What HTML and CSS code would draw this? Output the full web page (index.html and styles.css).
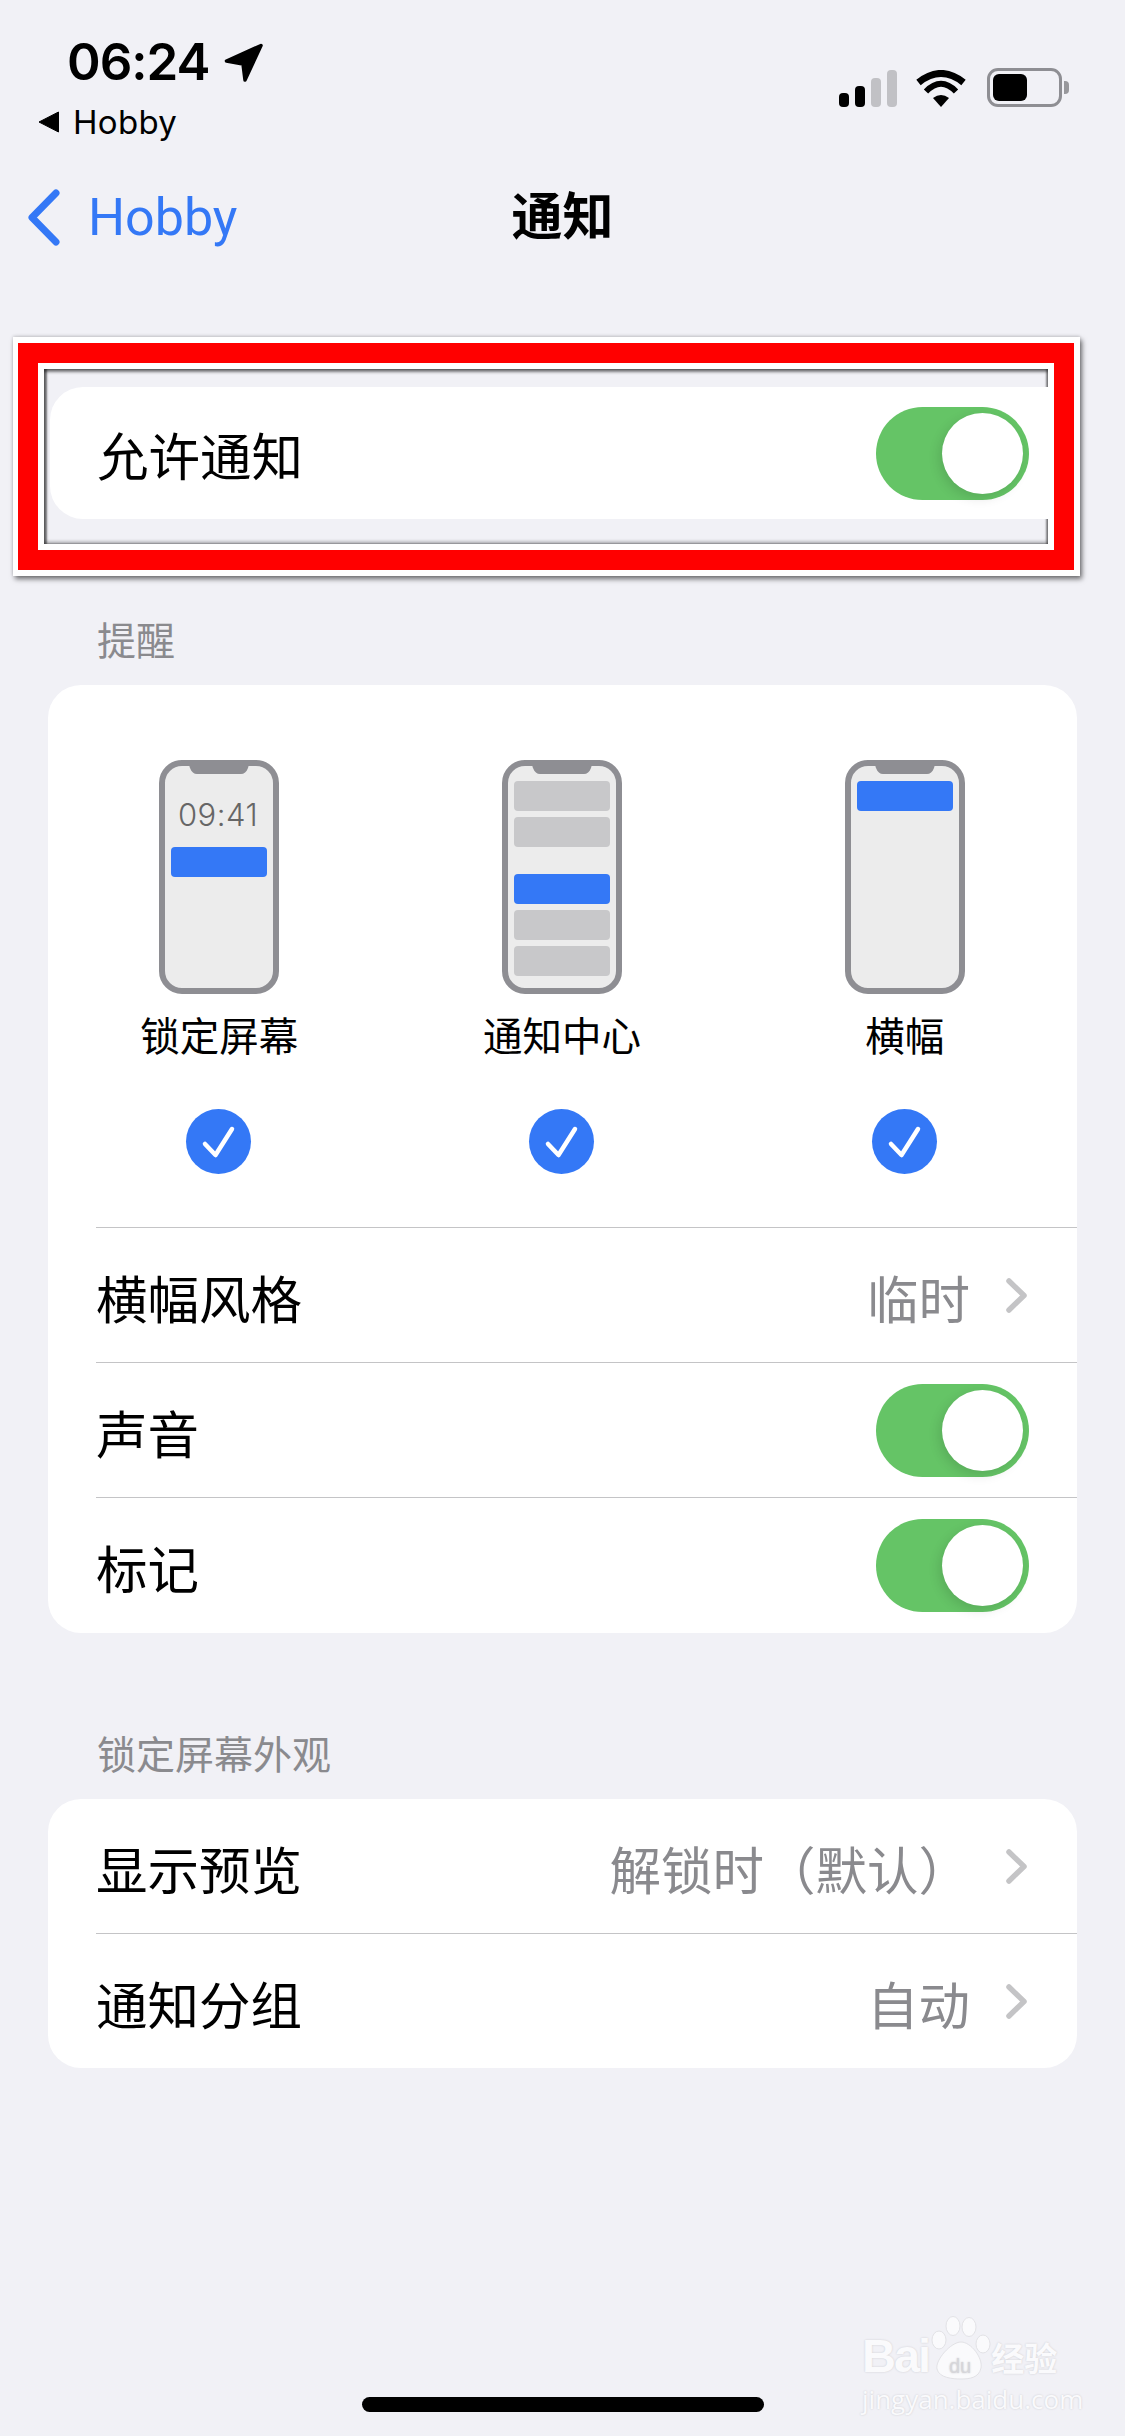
FILE: index.html
```html
<!DOCTYPE html>
<html lang="zh-CN">
<head>
    <meta charset="UTF-8">
    <meta name="viewport" content="width=device-width, initial-scale=1.0">
    <title>通知</title>
    <link rel="stylesheet" href="styles.css">
</head>
<body>
    <div class="page">
        <div class="status-bar">
            <div class="status-left">
                <div class="clock">
                    <span class="time">06:24</span>
                    <svg class="location" viewBox="0 0 40 39"><path d="M37 2.500 L2.500 18 L19 21 L21 37 Z" fill="#000" stroke="#000" stroke-width="3.500" stroke-linejoin="round"/></svg>
                </div>
                <div class="back-app">
                    <svg class="back-triangle" viewBox="0 0 22 22"><path d="M20.500 1 V21 L1 11 Z" fill="#000" stroke="#000" stroke-linejoin="round"/></svg>
                    <span>Hobby</span>
                </div>
            </div>
            <div class="status-right">
                <div class="signal">
                    <span class="bar bar-1"></span>
                    <span class="bar bar-2"></span>
                    <span class="bar bar-3 bar-off"></span>
                    <span class="bar bar-4 bar-off"></span>
                </div>
                <svg class="wifi" viewBox="0 0 51 37">
                    <path d="M2.500 12.500 Q25 -5.500 47.500 12.500" fill="none" stroke="#000" stroke-width="7"/>
                    <path d="M10 21.500 Q25 6 40 21.500" fill="none" stroke="#000" stroke-width="6"/>
                    <path d="M17 28 Q25 22 33 28 L25 37 Z" fill="#000"/>
                </svg>
                <div class="battery">
                    <div class="battery-body"><div class="battery-level"></div></div>
                    <div class="battery-tip"></div>
                </div>
            </div>
        </div>

        <div class="nav">
            <div class="nav-back">
                <svg class="nav-chevron" viewBox="0 0 33 57"><path d="M29 4 L5 28.500 L29 53" fill="none" stroke="#3478f6" stroke-width="7" stroke-linecap="round" stroke-linejoin="round"/></svg>
                <span>Hobby</span>
            </div>
            <div class="nav-title">通知</div>
            <div></div>
        </div>

        <div class="mark-outer">
            <div class="mark-red">
                <div class="mark-white">
                    <div class="mark-shot">
                        <div class="card card-cut">
                            <div class="row row-first">
                                <span>允许通知</span>
                                <div class="toggle"><div class="knob"></div></div>
                            </div>
                        </div>
                    </div>
                </div>
            </div>
        </div>

        <div class="section-label">提醒</div>
        <div class="card card-alerts">
            <div class="styles">
                <div class="style-item">
                    <svg class="phone" viewBox="0 0 120 234">
                        <rect x="3" y="3" width="114" height="228" rx="20" fill="#ececec" stroke="#8e8e93" stroke-width="6"/>
                        <path d="M28 4 C31 4 30 6 31 8 C32.500 12 35 14 38 14 H82 C85 14 87.500 12 89 8 C90 6 89 4 92 4 Z" fill="#8e8e93"/>
                        <text class="phone-time" x="59" y="66" text-anchor="middle">09:41</text>
                        <rect x="12" y="87" width="96" height="30" rx="4" fill="#3478f6"/>
                    </svg>
                    <div class="style-name">锁定屏幕</div>
                    <div class="check"><svg viewBox="0 0 65 65"><path d="M19 35 L29.500 46 L46 20" fill="none" stroke="#fff" stroke-width="4.500" stroke-linecap="round" stroke-linejoin="round"/></svg></div>
                </div>
                <div class="style-item">
                    <svg class="phone" viewBox="0 0 120 234">
                        <rect x="3" y="3" width="114" height="228" rx="20" fill="#ececec" stroke="#8e8e93" stroke-width="6"/>
                        <path d="M28 4 C31 4 30 6 31 8 C32.500 12 35 14 38 14 H82 C85 14 87.500 12 89 8 C90 6 89 4 92 4 Z" fill="#8e8e93"/>
                        <rect x="12" y="21" width="96" height="30" rx="4" fill="#c8c8ca"/>
                        <rect x="12" y="57" width="96" height="30" rx="4" fill="#c8c8ca"/>
                        <rect x="12" y="114" width="96" height="30" rx="4" fill="#3478f6"/>
                        <rect x="12" y="150" width="96" height="30" rx="4" fill="#c8c8ca"/>
                        <rect x="12" y="186" width="96" height="30" rx="4" fill="#c8c8ca"/>
                    </svg>
                    <div class="style-name">通知中心</div>
                    <div class="check"><svg viewBox="0 0 65 65"><path d="M19 35 L29.500 46 L46 20" fill="none" stroke="#fff" stroke-width="4.500" stroke-linecap="round" stroke-linejoin="round"/></svg></div>
                </div>
                <div class="style-item">
                    <svg class="phone" viewBox="0 0 120 234">
                        <rect x="3" y="3" width="114" height="228" rx="20" fill="#ececec" stroke="#8e8e93" stroke-width="6"/>
                        <path d="M28 4 C31 4 30 6 31 8 C32.500 12 35 14 38 14 H82 C85 14 87.500 12 89 8 C90 6 89 4 92 4 Z" fill="#8e8e93"/>
                        <rect x="12" y="21" width="96" height="30" rx="4" fill="#3478f6"/>
                    </svg>
                    <div class="style-name">横幅</div>
                    <div class="check"><svg viewBox="0 0 65 65"><path d="M19 35 L29.500 46 L46 20" fill="none" stroke="#fff" stroke-width="4.500" stroke-linecap="round" stroke-linejoin="round"/></svg></div>
                </div>
            </div>
            <div class="row">
                <span>横幅风格</span>
                <div class="row-value">
                    <span>临时</span>
                    <svg class="row-chevron" viewBox="0 0 21 35"><path d="M3 3 L18 17.500 L3 32" fill="none" stroke="#c4c4c6" stroke-width="5.500" stroke-linecap="round" stroke-linejoin="round"/></svg>
                </div>
            </div>
            <div class="row">
                <span>声音</span>
                <div class="toggle"><div class="knob"></div></div>
            </div>
            <div class="row">
                <span>标记</span>
                <div class="toggle"><div class="knob"></div></div>
            </div>
        </div>

        <div class="section-label section-gap">锁定屏幕外观</div>
        <div class="card">
            <div class="row row-first">
                <span>显示预览</span>
                <div class="row-value">
                    <span>解锁时（默认）</span>
                    <svg class="row-chevron" viewBox="0 0 21 35"><path d="M3 3 L18 17.500 L3 32" fill="none" stroke="#c4c4c6" stroke-width="5.500" stroke-linecap="round" stroke-linejoin="round"/></svg>
                </div>
            </div>
            <div class="row">
                <span>通知分组</span>
                <div class="row-value">
                    <span>自动</span>
                    <svg class="row-chevron" viewBox="0 0 21 35"><path d="M3 3 L18 17.500 L3 32" fill="none" stroke="#c4c4c6" stroke-width="5.500" stroke-linecap="round" stroke-linejoin="round"/></svg>
                </div>
            </div>
        </div>

        <div class="home-indicator"></div>

        <!-- watermark sits over the page -->
        <div class="watermark">
            <div class="wm-logo">
                <span class="wm-bai">Bai</span>
                <svg class="wm-paw" viewBox="0 0 60 64">
                    <ellipse cx="8" cy="24" rx="7" ry="9" fill="#fafafc" stroke="#e2e2e6"/>
                    <ellipse cx="22" cy="10" rx="7" ry="9.500" fill="#fafafc" stroke="#e2e2e6"/>
                    <ellipse cx="38" cy="11" rx="7" ry="9.500" fill="#fafafc" stroke="#e2e2e6"/>
                    <ellipse cx="52" cy="28" rx="7" ry="9" fill="#fafafc" stroke="#e2e2e6"/>
                    <path d="M30 26 C40 26 52 42 50 52 C48 62 38 63 30 63 C22 63 8 62 6 53 C4 44 20 26 30 26 Z" fill="#fafafc" stroke="#e2e2e6"/>
                    <text class="wm-du" x="29" y="57" text-anchor="middle">du</text>
                </svg>
                <span class="wm-name">经验</span>
            </div>
            <div class="wm-url">jingyan.baidu.com</div>
        </div>
    </div>
</body>
</html>
```
FILE: styles.css
```css
body {
    margin: 0;
    background-color: #f1f1f6;
    font-family: Roboto, "Noto Sans CJK SC", sans-serif;
    color: #000;
}
.page {
    position: relative;
    width: 1125px;
    height: 2436px;
    overflow: hidden;
}

/* status bar */
.status-bar {
    display: flex;
    justify-content: space-between;
    height: 150px;
    box-sizing: border-box;
}
.status-left {
    padding: 36px 0 0 38px;
}
.clock {
    display: flex;
    align-items: center;
    height: 52px;
    padding-left: 29px;
}
.time {
    font-family: Inter, sans-serif;
    font-size: 51px;
    font-weight: 600;
    line-height: 52px;
    letter-spacing: -1px;
}
.location {
    width: 40px;
    height: 39px;
    margin-left: 15px;
}
.back-app {
    display: flex;
    align-items: center;
    margin-top: 14px;
    font-family: Inter, sans-serif;
    font-size: 33px;
    line-height: 40px;
    letter-spacing: 0.3px;
}
.back-triangle {
    width: 22px;
    height: 22px;
    margin-right: 13px;
}
.status-right {
    display: flex;
    align-items: flex-end;
    height: 107px;
    padding-right: 56px;
}
.signal {
    display: flex;
    align-items: flex-end;
    gap: 6px;
    margin-right: 19px;
}
.bar {
    width: 10px;
    border-radius: 4px;
    background-color: #000;
}
.bar-1 { height: 14px; }
.bar-2 { height: 21px; }
.bar-3 { height: 29px; }
.bar-4 { height: 37px; }
.bar-off {
    background-color: #c1c1c5;
}
.wifi {
    width: 51px;
    height: 37px;
    margin-right: 20px;
}
.battery {
    display: flex;
    align-items: center;
}
.battery-body {
    width: 75px;
    height: 39px;
    box-sizing: border-box;
    padding: 3px;
    border: 3px solid #8e8e93;
    border-radius: 11px;
}
.battery-level {
    width: 34px;
    height: 27px;
    border-radius: 6px;
    background-color: #000;
}
.battery-tip {
    width: 5px;
    height: 13px;
    margin-left: 2px;
    border-radius: 0 4px 4px 0;
    background-color: #98989c;
}

/* nav */
.nav {
    display: grid;
    grid-template-columns: 1fr auto 1fr;
    align-items: center;
    height: 134px;
}
.nav-back {
    display: flex;
    align-items: center;
    padding-left: 27px;
    font-size: 52px;
    color: #3478f6;
}
.nav-chevron {
    width: 33px;
    height: 57px;
    margin-right: 28px;
}
.nav-title {
    margin-bottom: 8px;
    font-size: 51px;
    font-weight: 700;
}

/* red mark pasted over the first row */
.mark-outer {
    width: 1067px;
    height: 239px;
    box-sizing: border-box;
    margin: 53px 0 0 13px;
    padding: 6px 6px 6px 5px;
    background-color: #fff;
    box-shadow: 2px 3px 5px rgba(0, 0, 0, 0.55), 0 -1px 3px rgba(0, 0, 0, 0.15);
}
.mark-red {
    height: 227px;
    box-sizing: border-box;
    padding: 20px;
    background-color: #f00;
}
.mark-white {
    height: 187px;
    box-sizing: border-box;
    padding: 6px;
    background-color: #fff;
}
.mark-shot {
    height: 175px;
    box-sizing: border-box;
    padding: 18px 0 0 6px;
    overflow: hidden;
    background-color: #f1f1f6;
    box-shadow: inset 0 3px 3px rgba(0, 0, 0, 0.5), inset 3px 0 2px rgba(0, 0, 0, 0.5), inset -2px 0 2px rgba(0, 0, 0, 0.35), inset 0 -3px 3px rgba(0, 0, 0, 0.2);
}

/* settings groups */
.section-label {
    box-sizing: border-box;
    height: 109px;
    padding: 43px 0 0 97px;
    font-size: 39px;
    line-height: 46px;
    color: #8a8a8e;
}
.section-gap {
    margin-top: 57px;
}
.card {
    width: 1029px;
    margin-left: 48px;
    border-radius: 33px;
    background-color: #fff;
    overflow: hidden;
}
.card-alerts {
    padding-bottom: 1px;
}
.card-cut {
    width: 1040px;
    margin-left: 0;
    border-radius: 33px 0 0 33px;
}
.row {
    display: flex;
    align-items: center;
    justify-content: space-between;
    height: 135px;
    box-sizing: border-box;
    margin-left: 48px;
    padding-right: 50px;
    border-top: 1px solid #c4c4c6;
    font-size: 51.5px;
}
.row > span,
.row-value > span {
    margin-top: 2px;
}
.row-first {
    height: 134px;
    border-top: none;
}
.card-cut .row {
    height: 132px;
    margin-left: 47px;
    padding-right: 63px;
}
.card-cut .row > span {
    margin-top: 0;
}
.row-value {
    display: flex;
    align-items: center;
    gap: 36px;
    color: #8a8a8e;
}
.row-chevron {
    width: 21px;
    height: 35px;
}
.toggle {
    display: flex;
    justify-content: flex-end;
    align-items: center;
    width: 153px;
    height: 93px;
    box-sizing: border-box;
    margin-right: -2px;
    padding: 0 6px;
    border-radius: 47px;
    background-color: #65c466;
}
.knob {
    width: 81px;
    height: 81px;
    border-radius: 50%;
    background-color: #fff;
    box-shadow: -3px 4px 12px rgba(0, 0, 0, 0.12);
}

/* notification styles */
.styles {
    display: grid;
    grid-template-columns: repeat(3, 1fr);
    height: 542px;
    box-sizing: border-box;
    padding: 75px 1px 0 0;
}
.style-item {
    display: flex;
    flex-direction: column;
    align-items: center;
}
.phone {
    width: 120px;
    height: 234px;
}
.phone-time {
    font-family: Inter, sans-serif;
    font-size: 31px;
    font-weight: 300;
    letter-spacing: 0.5px;
    fill: #666;
}
.style-name {
    margin-top: 16px;
    font-size: 39.5px;
    line-height: 56px;
}
.check {
    width: 65px;
    height: 65px;
    margin-top: 43px;
    margin-right: 1px;
    border-radius: 50%;
    background-color: #3478f6;
}
.check svg {
    display: block;
}

.home-indicator {
    position: absolute;
    left: 362px;
    top: 2397px;
    width: 402px;
    height: 15px;
    border-radius: 8px;
    background-color: #000;
}

.watermark {
    position: absolute;
    left: 862px;
    top: 2316px;
    width: 205px;
    color: #fafafc;
    text-shadow: 0 0 2px #c9c9cd;
}
.wm-logo {
    display: flex;
    align-items: flex-end;
    height: 64px;
}
.wm-bai {
    font-family: "Liberation Sans", sans-serif;
    font-size: 47px;
    font-weight: 700;
    line-height: 48px;
    letter-spacing: -2px;
}
.wm-paw {
    width: 60px;
    height: 64px;
    flex-shrink: 0;
    margin-left: 2px;
}
.wm-du {
    font-family: "Liberation Sans", sans-serif;
    font-size: 20px;
    fill: #d6d6da;
}
.wm-name {
    font-size: 33px;
    font-weight: 700;
    line-height: 40px;
    white-space: nowrap;
}
.wm-url {
    margin-top: 7px;
    font-family: "Open Sans", sans-serif;
    font-size: 26px;
    line-height: 24px;
    white-space: nowrap;
}
```
